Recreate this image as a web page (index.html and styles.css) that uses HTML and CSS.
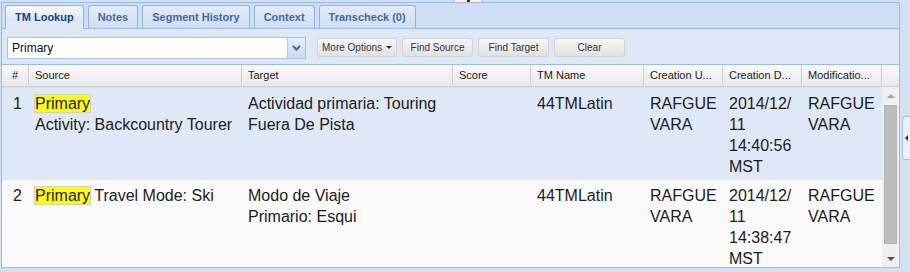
FILE: index.html
```html
<!DOCTYPE html>
<html lang="en">
<head>
    <title>TM Lookup</title>
    <link rel="stylesheet" href="styles.css">
</head>
<body>
<div class="knob"><span></span></div>
<div class="layout">
    <div class="panel">
        <div class="tabs">
            <div class="tab active">TM Lookup</div>
            <div class="tab">Notes</div>
            <div class="tab">Segment History</div>
            <div class="tab">Context</div>
            <div class="tab">Transcheck (0)</div>
        </div>

        <div class="toolbar">
            <div class="combo">
                <span class="combo-text">Primary</span>
                <span class="combo-trigger">
                    <svg width="9" height="6" viewBox="0 0 9 6"><path d="M1 1 L4.5 4.5 L8 1" fill="none" stroke="#3d65a0" stroke-width="2"/></svg>
                </span>
            </div>
            <button class="btn">More Options <span class="caret"></span></button>
            <button class="btn">Find Source</button>
            <button class="btn">Find Target</button>
            <button class="btn">Clear</button>
        </div>

        <div class="grid">
            <div class="grid-head">
                <div class="hcell">#</div>
                <div class="hcell">Source</div>
                <div class="hcell">Target</div>
                <div class="hcell">Score</div>
                <div class="hcell">TM Name</div>
                <div class="hcell">Creation U...</div>
                <div class="hcell">Creation D...</div>
                <div class="hcell">Modificatio...</div>
                <div class="hcell last"></div>
            </div>
            <div class="grid-main">
                <div class="grid-body">
                    <div class="row selected">
                        <div class="cell num">1</div>
                        <div class="cell"><span class="hit">Primary</span><br>Activity: Backcountry Tourer</div>
                        <div class="cell">Actividad primaria: Touring<br>Fuera De Pista</div>
                        <div class="cell"></div>
                        <div class="cell">44TMLatin</div>
                        <div class="cell">RAFGUEVARA</div>
                        <div class="cell">2014/12/11 14:40:56 MST</div>
                        <div class="cell">RAFGUEVARA</div>
                    </div>
                    <div class="row">
                        <div class="cell num">2</div>
                        <div class="cell"><span class="hit">Primary</span> Travel Mode: Ski</div>
                        <div class="cell">Modo de Viaje<br>Primario: Esqui</div>
                        <div class="cell"></div>
                        <div class="cell">44TMLatin</div>
                        <div class="cell">RAFGUEVARA</div>
                        <div class="cell">2014/12/11 14:38:47 MST</div>
                        <div class="cell">RAFGUEVARA</div>
                    </div>
                </div>
                <div class="scrollbar">
                    <div class="sb-arrow up"></div>
                    <div class="sb-thumb"></div>
                    <div class="sb-arrow down"></div>
                </div>
            </div>
        </div>
    </div>

    <div class="east">
        <div class="east-handle"><span class="east-arrow"></span></div>
    </div>
</div>
</body>
</html>
```

FILE: styles.css
```css
body {
    margin: 0;
    background-color: #d3e1f2;
    font-family: "Liberation Sans", Arial, sans-serif;
    width: 910px;
    height: 272px;
    overflow: hidden;
}
.layout {
    display: flex;
    padding: 2px 0 0 1px;
}
.panel {
    width: 897px;
    border: 1px solid #99bbe8;
    background-color: #dfe8f6;
}

/* tabs */
.tabs {
    display: flex;
    align-items: flex-end;
    gap: 4px;
    height: 25px;
    padding-left: 3px;
    background-color: #cedff5;
    border-bottom: 1px solid #99bbe8;
}
.tab {
    height: 22px;
    line-height: 22px;
    padding: 0 9px;
    border: 1px solid #8db2e3;
    border-bottom: none;
    border-radius: 3px 3px 0 0;
    background: linear-gradient(#e3ecf8, #d0def2);
    color: #416aa3;
    font-size: 11px;
    font-weight: bold;
}
.tab.active {
    height: 23px;
    margin-bottom: -1px;
    background: linear-gradient(#f6f9fd, #dfe8f6 60%);
    color: #15428b;
}

/* toolbar */
.toolbar {
    display: flex;
    align-items: flex-start;
    gap: 5px;
    height: 36px;
    padding: 8px 0 0 5px;
    box-sizing: border-box;
    border-bottom: 1px solid #99bbe8;
}
.combo {
    display: flex;
    width: 299px;
    height: 22px;
    box-sizing: border-box;
    border: 1px solid #a9c2e2;
    background-color: #fff;
    margin-right: 6px;
}
.combo-text {
    flex: 1;
    padding-left: 4px;
    line-height: 20px;
    font-size: 12px;
    color: #111;
}
.combo-trigger {
    width: 17px;
    display: flex;
    align-items: center;
    justify-content: center;
    border-left: 1px solid #b5c9e6;
    background: linear-gradient(#e6eef9, #cbdbf0);
}
.btn {
    display: flex;
    align-items: center;
    justify-content: center;
    gap: 4px;
    min-width: 71px;
    height: 19px;
    margin-top: 1px;
    padding: 0 4px;
    border: 1px solid #d3d3d3;
    border-radius: 3px;
    background: linear-gradient(#f7f7f7, #e1e1e1);
    font-family: "Liberation Sans", Arial, sans-serif;
    font-size: 10px;
    color: #333;
}
.caret {
    width: 0;
    height: 0;
    border-left: 3px solid transparent;
    border-right: 3px solid transparent;
    border-top: 3px solid #333;
}

/* grid */
.grid {
    background-color: #fafafa;
}
.grid-head,
.row {
    display: grid;
    grid-template-columns: 27px 213px 211px 78px 113px 79px 79px 80px;
}
.grid-head {
    grid-template-columns: 27px 213px 211px 78px 113px 79px 79px 80px 17px;
    height: 21px;
    border-bottom: 1px solid #d0d0d0;
    background: linear-gradient(#fbfbfb, #e8e9eb);
}
.hcell {
    padding-left: 6px;
    line-height: 21px;
    font-size: 11px;
    color: #222;
    border-right: 1px solid #d0d0d0;
    white-space: nowrap;
    overflow: hidden;
}
.hcell:first-child {
    padding-left: 10px;
}
.hcell.last {
    border-right: none;
}
.grid-main {
    display: flex;
    height: 180px;
}
.grid-body {
    flex: 1;
    overflow: hidden;
}
.row {
    border-top: 1px dotted #cfd6df;
    padding: 5px 0 2px;
    height: 84px;
    font-size: 16px;
    line-height: 21px;
    color: #1c1c1c;
}
.row.selected {
    background-color: #dfe8f6;
}
.cell {
    padding: 0 4px 0 6px;
    overflow-wrap: anywhere;
}
.cell.num {
    padding-left: 11px;
}
.hit {
    background-color: #ffff00;
    outline: 1px solid #d2d2b4;
}

/* scrollbar */
.scrollbar {
    width: 17px;
    display: flex;
    flex-direction: column;
    align-items: center;
    background-color: #f0f0f0;
}
.sb-arrow {
    height: 17px;
    width: 100%;
    display: flex;
    align-items: center;
    justify-content: center;
}
.sb-arrow::before {
    content: "";
    border-left: 4px solid transparent;
    border-right: 4px solid transparent;
}
.sb-arrow.up::before {
    border-bottom: 4px solid #a3a3a3;
}
.sb-arrow.down {
    margin-top: auto;
}
.sb-arrow.down::before {
    border-top: 4px solid #505050;
}
.sb-thumb {
    width: 13px;
    height: 139px;
    margin-top: 1px;
    box-sizing: border-box;
    background-color: #bdbdbd;
    border: 1px solid #b4b4b4;
}

/* east collapse strip */
.east {
    width: 10px;
    padding-left: 2px;
    box-sizing: border-box;
}
.east-handle {
    height: 42px;
    margin-top: 114px;
    border: 1px solid #a8c3e6;
    border-right: none;
    border-radius: 4px 0 0 4px;
    background-color: #eaf0f9;
    display: flex;
    align-items: center;
    justify-content: center;
}
.east-arrow {
    border-top: 3px solid transparent;
    border-bottom: 3px solid transparent;
    border-right: 3px solid #333;
}

/* splitter knob at the top */
.knob {
    position: absolute;
    left: 453px;
    top: 0;
    width: 30px;
    height: 3px;
    box-sizing: border-box;
    border: 1px solid #b8b8b8;
    border-top: none;
    border-radius: 0 0 4px 4px;
    background-color: #f2f2f2;
    display: flex;
    justify-content: center;
}
.knob span {
    width: 3px;
    height: 2px;
    background-color: #333;
}
```
